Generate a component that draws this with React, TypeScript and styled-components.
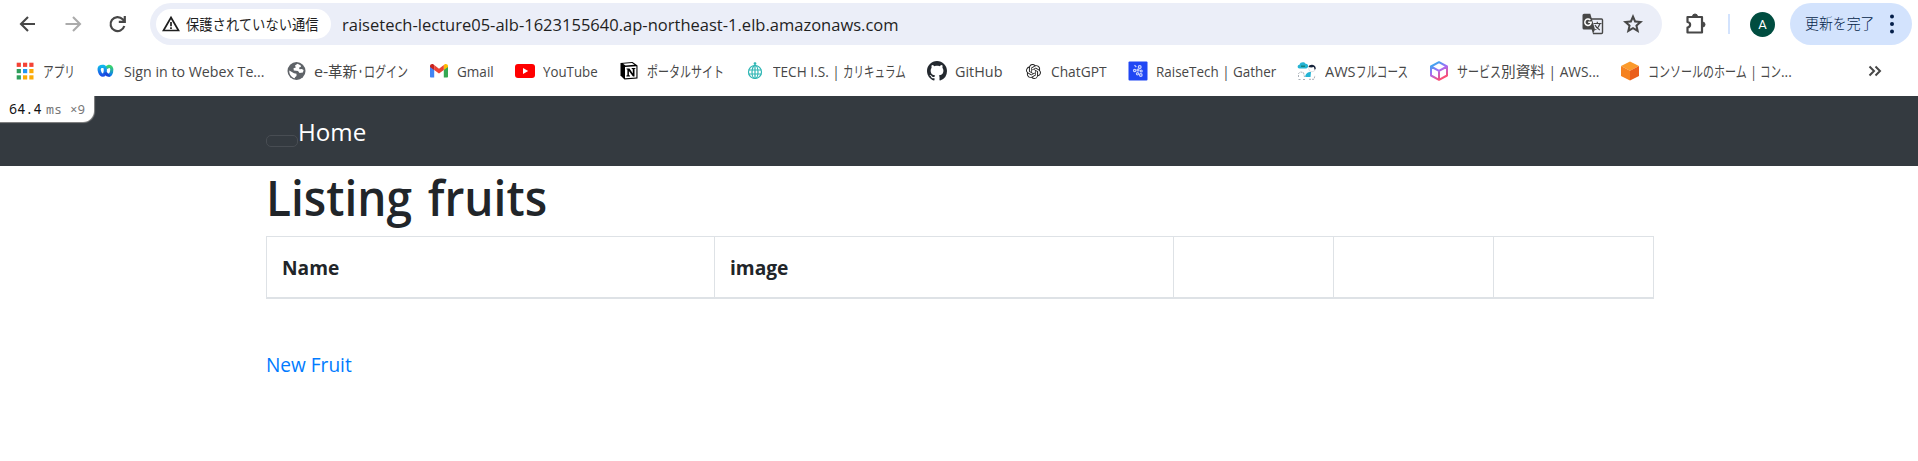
import React, { useLayoutEffect, useRef, useState } from "react";
import styled, { createGlobalStyle } from "styled-components";
import { SiOpenai } from "react-icons/si";

const GlobalStyle = createGlobalStyle`
  * { box-sizing: border-box; }
  body {
    margin: 0;
    background: #fff;
    font-family: "Open Sans", "Noto Sans CJK JP", sans-serif;
  }
`;

/* ---------- text that is condensed to a known width ---------- */

const FitBox = styled.span<{ $w: number }>`
  display: inline-block;
  flex: none;
  width: ${(p) => p.$w}px;
  white-space: pre;
`;

const FitInner = styled.span`
  display: inline-block;
  transform-origin: 0 50%;
`;

function Fit({ w, children }: { w: number; children: string }) {
  const ref = useRef<HTMLSpanElement>(null);
  const [scale, setScale] = useState(1);
  useLayoutEffect(() => {
    if (ref.current && ref.current.offsetWidth) {
      setScale(w / ref.current.offsetWidth);
    }
  }, [w, children]);
  return (
    <FitBox $w={w}>
      <FitInner ref={ref} style={{ transform: `scaleX(${scale})` }}>
        {children}
      </FitInner>
    </FitBox>
  );
}

/* ---------- browser toolbar ---------- */

const Toolbar = styled.header`
  display: flex;
  align-items: center;
  height: 48px;
  padding: 0 6px 0 16px;
`;

const NavButton = styled.span<{ $dim?: boolean }>`
  display: flex;
  width: 24px;
  height: 24px;
  margin-right: 21px;
  color: ${(p) => (p.$dim ? "#ababab" : "#474747")};
`;

const AddressBar = styled.div`
  display: flex;
  align-items: center;
  width: 1512px;
  height: 42px;
  padding: 0 17px 0 6px;
  border-radius: 21px;
  background: #ebeef8;
  color: #1f1f1f;
  margin-left: -1px;
`;

const SecurityChip = styled.div`
  display: flex;
  align-items: center;
  gap: 5px;
  width: 175px;
  height: 30px;
  padding-left: 5px;
  border-radius: 15px;
  background: #fff;
  font-size: 15px;
  line-height: 30px;
`;

const Url = styled.div`
  flex: 1;
  padding-left: 11px;
  font-size: 17px;
  line-height: 41px;
  height: 40px;
`;

const BarIcon = styled.span<{ $ml?: number }>`
  display: flex;
  margin-left: ${(p) => p.$ml ?? 0}px;
  color: #474747;
`;

const Divider = styled.span`
  width: 2px;
  height: 20px;
  margin-left: 20px;
  background: #d3e3fd;
`;

const Avatar = styled.span`
  width: 25px;
  height: 25px;
  margin-left: 20px;
  border-radius: 50%;
  background: #004d40;
  color: #fff;
  font: 400 13px/25px Roboto, sans-serif;
  text-align: center;
`;

const UpdateButton = styled.div`
  display: flex;
  align-items: center;
  justify-content: space-between;
  width: 122px;
  height: 42px;
  margin-left: 15px;
  padding: 0 17px 0 15px;
  border-radius: 21px;
  background: #d3e3fd;
  color: #041e49;
  font-size: 14.5px;
  font-weight: 300;
  line-height: 44px;
`;

/* ---------- bookmarks ---------- */

const Bookmarks = styled.nav`
  display: flex;
  align-items: center;
  gap: 21px;
  height: 48px;
  padding: 0 36px 2px 15px;
  color: #474747;
  font-size: 15px;
  line-height: 25px;
`;

const BookmarkItem = styled.div`
  display: flex;
  align-items: center;
  gap: 8px;
  height: 24px;
`;

const Favicon = styled.span`
  display: flex;
  justify-content: center;
  align-items: center;
  width: 20px;
  height: 20px;
`;

const Label = styled.span`
  display: flex;
  height: 24px;
`;

const Overflow = styled.span`
  display: flex;
  margin-left: auto;
`;

/* ---------- page ---------- */

const Navbar = styled.div`
  position: relative;
  height: 70px;
  background: #343a40;
  padding: 0 266px;
`;

const NavInner = styled.div`
  display: flex;
  align-items: flex-start;
  color: #fff;
  font-size: 24.5px;
  line-height: 38px;
  padding-top: 17px;
`;

const Toggler = styled.span`
  width: 32px;
  height: 12px;
  margin: 22px 0 0 0;
  border: 1px solid #484d53;
  border-radius: 5px;
`;

const ProfilerBadge = styled.div`
  position: absolute;
  left: 0;
  top: 0;
  display: flex;
  align-items: baseline;
  width: 94px;
  height: 26px;
  padding-left: 9px;
  background: #fff;
  border-bottom-right-radius: 11px;
  box-shadow: 0 0 1px 1px #888;
  clip-path: inset(0 -2px -2px 0);
  color: #111;
  font: 14px/26px "Noto Sans Mono", "Liberation Mono", monospace;
`;

const BadgeUnit = styled.span<{ $ml: number }>`
  margin-left: ${(p) => p.$ml}px;
  color: #777;
  font-size: 12.5px;
`;

const Container = styled.main`
  width: 1388px;
  margin-left: 266px;
  color: #212529;
  font-size: 19.5px;
  line-height: 30px;
`;

const Title = styled.h1`
  margin: 0;
  height: 70px;
  padding: 1px 0 0 0;
  font-size: 49px;
  font-weight: 600;
  line-height: 60px;
  word-spacing: 4px;
`;

const Table = styled.div`
  display: grid;
  grid-template-columns: 448px 459px 160px 160px 160px;
  height: 63px;
  border: solid #dee2e6;
  border-width: 1px 0 2px 1px;
`;

const HeadCell = styled.div`
  padding: 16px 15px;
  border-right: 1px solid #dee2e6;
  font-weight: 700;
  font-size: 19.5px;
`;

const NewLink = styled.a`
  display: block;
  margin-top: 51px;
  color: #007bff;
`;

/* ---------- icons ---------- */

const Stroke = ({ d, size = 24, w = 2 }: { d: string; size?: number; w?: number }) => (
  <svg width={size} height={size} viewBox="0 0 24 24" fill="none" stroke="currentColor" strokeWidth={w}>
    <path d={d} />
  </svg>
);

const AppsIcon = () => {
  const colors = ["#f44336", "#f44336", "#f44336", "#2e9e5b", "#2196f3", "#fbab07", "#2e9e5b", "#fbab07", "#fbab07"];
  return (
    <svg width="20" height="20">
      {colors.map((c, i) => (
        <rect key={i} x={1.7 + (i % 3) * 6.3} y={1.7 + Math.floor(i / 3) * 6.3} width="4.2" height="4.2" fill={c} />
      ))}
    </svg>
  );
};

const WebexIcon = () => (
  <svg width="20" height="20" viewBox="0 0 20 20" fill="none" strokeWidth="3.2">
    <defs>
      <linearGradient id="wx1" x1="0" y1="0" x2="0" y2="1">
        <stop offset="0" stopColor="#11b7ea" />
        <stop offset="1" stopColor="#1a4fe8" />
      </linearGradient>
      <linearGradient id="wx2" x1="0" y1="0" x2="0" y2="1">
        <stop offset="0" stopColor="#3bd66b" />
        <stop offset="1" stopColor="#0a7cf0" />
      </linearGradient>
    </defs>
    <path d="M10.5 7.5C11.5 5 14 4.6 15.200 6.400c1.400 2 .3 7.600-2.500 7.800" stroke="url(#wx2)" />
    <path d="M4 6c-2 2 0 8 2.800 8.200C9.500 14.300 10.500 6 7.500 5.400 6 5.200 4.800 5.400 4 6Z" stroke="url(#wx1)" />
    <path d="M9.500 11.500c1 2.500 2.500 3.300 4 2.300" stroke="#1747d8" />
  </svg>
);

const GlobeIcon = () => (
  <svg width="20" height="20" viewBox="0 0 20 20">
    <circle cx="10.500" cy="10" r="9" fill="#5f6368" />
    <path d="M11.500 2.800 9 4.500l.8 2-2.300.8.300 2.200 4.200.5 1.500 2 3.400-.5.700-2.500-1.800-1-2.300.3-.5-1.500 2-1-.5-1.500Z" fill="#fff" />
    <path d="M3.300 9.500l4.700 2.700 2.500.5v2.300l-1.500 1.300-.2 1C5.500 16.500 3 13.500 3.300 9.500Z" fill="#fff" />
  </svg>
);

const GmailIcon = () => (
  <svg width="20" height="20" viewBox="0 0 20 20">
    <path d="M1 5v10.500c0 .6.500 1 1 1h3.200V8Z" fill="#4285f4" />
    <path d="M19 5v10.500c0 .6-.5 1-1 1h-3.200V8Z" fill="#34a853" />
    <path d="M1 5.200C1 3.200 3.300 2.600 4.600 3.600L5.200 4v5L1 6Z" fill="#c5221f" />
    <path d="M19 5.200c0-2-2.300-2.600-3.600-1.600l-.6.4v5L19 6Z" fill="#fbbc04" />
    <path d="M5.200 4 10 7.700 14.800 4v5L10 12.600 5.200 9Z" fill="#ea4335" />
  </svg>
);

const YouTubeIcon = () => (
  <svg width="20" height="20" viewBox="0 0 20 20">
    <rect x="0" y="3" width="20" height="14" rx="3" fill="#f00" />
    <path d="m8 7 5.200 3L8 13Z" fill="#fff" />
  </svg>
);

const NotionIcon = () => (
  <svg width="20" height="20" viewBox="0 0 20 20">
    <path d="M1.500 2 13.500 1 18.500 4.500V17.500L5.500 18.600 1.500 14.500Z" fill="#000" />
    <path d="M4 2.700 13 1.900l2.500 1.900-9 .6Z" fill="#fff" />
    <path d="M6 6 17.400 5.300V16.600L6 17.300Z" fill="#fff" />
    <path d="M7.500 7.500h3l3.300 5V8.300l-1.100-.3v-.9l3.700-.2v.9l-.9.300v7.400h-1.500L9.900 10v4.200l1.100.3v.9H7.400v-.9l1-.3V8.600l-.9-.3Z" fill="#000" />
  </svg>
);

const TechIcon = () => (
  <svg width="20" height="20" viewBox="0 0 20 20" fill="none" stroke="#2cb5b3" strokeWidth="1.200">
    <circle cx="10" cy="11" r="6.500" />
    <ellipse cx="10" cy="11" rx="3" ry="6.500" />
    <path d="M3.500 9h13M3.500 13h13M10 4v13.500" />
    <circle cx="10" cy="2.600" r=".8" fill="#2cb5b3" />
  </svg>
);

const GitHubIcon = () => (
  <svg width="20" height="20" viewBox="0 0 16 16" fill="#24292f">
    <path d="M8 0C3.580 0 0 3.580 0 8c0 3.540 2.290 6.530 5.470 7.590.4.070.55-.17.55-.38 0-.19-.01-.82-.01-1.490-2.010.37-2.530-.49-2.690-.94-.09-.23-.48-.94-.82-1.130-.28-.15-.68-.52-.01-.53.63-.01 1.080.58 1.230.82.72 1.210 1.870.87 2.330.66.07-.52.28-.87.51-1.070-1.780-.2-3.640-.89-3.640-3.950 0-.87.31-1.590.82-2.150-.08-.2-.36-1.020.08-2.120 0 0 .67-.21 2.200.82.64-.18 1.320-.27 2-.27s1.360.09 2 .27c1.530-1.040 2.200-.82 2.200-.82.44 1.100.16 1.920.08 2.120.51.56.82 1.270.82 2.150 0 3.070-1.870 3.750-3.650 3.950.29.25.54.73.54 1.480 0 1.070-.01 1.930-.01 2.200 0 .21.15.46.55.38A8.010 8.010 0 0 0 16 8c0-4.420-3.580-8-8-8Z" />
  </svg>
);

const GatherIcon = () => (
  <svg width="20" height="20" viewBox="0 0 20 20">
    <rect x=".5" y=".5" width="19" height="19" rx="1" fill="#2047f4" />
    <g fill="none" stroke="#c9d3ff" strokeWidth="1.200">
      <path d="M6.500 4.200 8.300 6" />
      <circle cx="11.700" cy="6" r="1.400" />
      <circle cx="6.700" cy="9.500" r="1.200" />
      <circle cx="10" cy="9" r="1" />
      <circle cx="13.200" cy="10" r="1" />
      <circle cx="9.500" cy="12.700" r="1.100" />
      <circle cx="12.800" cy="14" r="1.300" />
    </g>
  </svg>
);

const AwsCourseIcon = () => (
  <svg width="20" height="20" viewBox="0 0 20 20">
    <path d="M3 7.500C0 8 0 3.800 2.500 3.800 3 .8 7.500.6 8.500 2.800c3.200-.3 3.500 4 .8 4.700Z" fill="#25b4d4" />
    <path d="M4 5.200h4" stroke="#176" strokeWidth="1.200" />
    <circle cx="15" cy="7.500" r="3.300" fill="#fff" stroke="#c8cdd2" strokeWidth=".6" />
    <path d="M11.500 6C12 3 18.500 2.500 18.800 7.500l-1 1.500-1-3c-2 .6-3.500.5-5.300 0Z" fill="#17233a" />
    <path d="M8 15.500c1-4 4-5 6-4.500l-.5 5H9Z" fill="#25b4d4" />
    <path d="M1.500 16v-3.500l2-1.500 3 .5 1 4.500M1.500 18.500h3M6 18.500h3M12 18.300h5l1-4" fill="none" stroke="#a0a8b0" strokeWidth=".9" strokeDasharray="2 1" />
  </svg>
);

const CubeIcon = () => (
  <svg width="20" height="20" viewBox="0 0 20 20" fill="none" strokeWidth="2" strokeLinejoin="round">
    <defs>
      <linearGradient id="cb" x1=".1" y1="0" x2=".6" y2="1">
        <stop offset="0" stopColor="#1fb6ee" />
        <stop offset=".5" stopColor="#a66cf5" />
        <stop offset="1" stopColor="#ff4d6d" />
      </linearGradient>
    </defs>
    <path d="M10 1.200 18 5.500v9L10 18.800 2 14.500v-9ZM2 5.500l8 4.300 8-4.300M10 9.800v9" stroke="url(#cb)" />
  </svg>
);

const OrangeCubeIcon = () => (
  <svg width="20" height="20" viewBox="0 0 20 20">
    <path d="M10 .5 19 5 10 9.700 1 5Z" fill="#fb9a2b" />
    <path d="M1 5l9 4.700v9.800L1 15Z" fill="#f58220" />
    <path d="M19 5 10 9.700v9.800L19 15Z" fill="#ea5f1c" />
  </svg>
);

const WarningIcon = () => (
  <svg width="20" height="20" viewBox="0 0 20 20" fill="none" stroke="#1f1f1f" strokeWidth="1.700">
    <path d="M10 3.500 17.500 16.500h-15Z" />
    <path d="M10 8v4.200M10 13.200v1.700" />
  </svg>
);

const TranslateIcon = () => (
  <svg width="22" height="22" viewBox="0 0 22 22">
    <path d="M9 6h10.500a1 1 0 0 1 1 1v12.500a1 1 0 0 1-1 1H11" fill="none" stroke="#474747" strokeWidth="1.400" />
    <path d="M2 .8h6.300L13 16.500l-2 4.500-1.300-4.500H2a1.500 1.500 0 0 1-1.500-1.500V2.300A1.500 1.500 0 0 1 2 .8Z" fill="#474747" />
    <path d="M8.300 7A3.200 3.200 0 1 0 9.200 9.300H6.200" fill="none" stroke="#fff" strokeWidth="1.500" />
    <path d="M11.500 10.500h8M15.300 8.800v1.700M18 10.500c-.8 3-2.700 5-4.700 6.300M13 12c1 2.200 2.700 3.700 4.800 5" fill="none" stroke="#474747" strokeWidth="1.200" />
  </svg>
);

const StarIcon = () => (
  <svg width="24" height="24" viewBox="0 0 24 24" fill="currentColor">
    <path d="m8.850 16.830 3.150-1.900 3.150 1.930-.83-3.600 2.780-2.400-3.650-.32L12 7.150l-1.450 3.370-3.650.32 2.780 2.430-.83 3.560ZM5.820 21l1.630-7.030L2 9.250l7.200-.63L12 2l2.800 6.620 7.200.63-5.450 4.720L18.180 21 12 17.270 5.820 21Z" />
  </svg>
);

const PuzzleIcon = () => (
  <svg width="24" height="24" viewBox="0 0 24 24" fill="none" stroke="currentColor" strokeWidth="2.200" strokeLinejoin="round">
    <path d="M3.500 5H18v15.500H3.500v-5c3.500-.5 3.500-5 0-5.500Z" />
    <path d="M8.500 4.500a2.500 2.500 0 0 1 5 0ZM18.500 10a2.400 2.400 0 0 1 0 5Z" fill="currentColor" strokeWidth="1" />
  </svg>
);

const DotsIcon = () => (
  <svg width="6" height="22" fill="#041e49">
    <circle cx="3" cy="3.500" r="2" />
    <circle cx="3" cy="11" r="2" />
    <circle cx="3" cy="18.500" r="2" />
  </svg>
);

type Part = [string, number];

const bookmarks: { icon: React.ReactNode; parts: Part[] }[] = [
  { icon: <AppsIcon />, parts: [["アプリ", 32]] },
  { icon: <WebexIcon />, parts: [["Sign in to Webex Te...", 141]] },
  { icon: <GlobeIcon />, parts: [["e-", 14], ["革新", 29], ["・", 7], ["ログイン", 44]] },
  { icon: <GmailIcon />, parts: [["Gmail", 37]] },
  { icon: <YouTubeIcon />, parts: [["YouTube", 55]] },
  { icon: <NotionIcon />, parts: [["ポータルサイト", 77]] },
  { icon: <TechIcon />, parts: [["TECH I.S. | ", 70], ["カリキュラム", 63]] },
  { icon: <GitHubIcon />, parts: [["GitHub", 47]] },
  { icon: <SiOpenai size={15} color="#222" />, parts: [["ChatGPT", 56]] },
  { icon: <GatherIcon />, parts: [["RaiseTech | Gather", 120]] },
  { icon: <AwsCourseIcon />, parts: [["AWS", 31], ["フルコース", 52]] },
  { icon: <CubeIcon />, parts: [["サービス", 44], ["別資料", 44], [" | AWS...", 54]] },
  { icon: <OrangeCubeIcon />, parts: [["コンソールのホーム", 99], [" | ", 13], ["コン", 21], ["...", 11]] },
];

export default function App() {
  return (
    <>
      <GlobalStyle />
      <Toolbar>
        <NavButton>
          <Stroke d="M19 12H5M12 5 5 12l7 7" w={2.100} />
        </NavButton>
        <NavButton $dim>
          <Stroke d="M4.500 12H19M12 5l7 7-7 7" w={2.100} />
        </NavButton>
        <NavButton>
          <Stroke d="M18.300 14a7 7 0 1 1-1.600-6.700L18.500 9M18.800 4v5.800h-6" w={2.200} />
        </NavButton>
        <AddressBar>
          <SecurityChip>
            <WarningIcon />
            <Fit w={133}>保護されていない通信</Fit>
          </SecurityChip>
          <Url>
            <Fit w={557}>raisetech-lecture05-alb-1623155640.ap-northeast-1.elb.amazonaws.com</Fit>
          </Url>
          <BarIcon>
            <TranslateIcon />
          </BarIcon>
          <BarIcon $ml={17}>
            <StarIcon />
          </BarIcon>
        </AddressBar>
        <BarIcon $ml={22}>
          <PuzzleIcon />
        </BarIcon>
        <Divider />
        <Avatar>A</Avatar>
        <UpdateButton>
          <Fit w={70}>更新を完了</Fit>
          <DotsIcon />
        </UpdateButton>
      </Toolbar>
      <Bookmarks>
        {bookmarks.map((b, i) => (
          <BookmarkItem key={i}>
            <Favicon>{b.icon}</Favicon>
            <Label>
              {b.parts.map(([text, w]) => (
                <Fit key={text} w={w}>
                  {text}
                </Fit>
              ))}
            </Label>
          </BookmarkItem>
        ))}
        <Overflow>
          <svg width="14" height="12" viewBox="0 0 14 12" fill="none" stroke="#474747" strokeWidth="2">
            <path d="m1.500 1.500 4.500 4.500-4.500 4.500M7.500 1.500 12 6l-4.500 4.500" />
          </svg>
        </Overflow>
      </Bookmarks>
      <Navbar>
        <ProfilerBadge>
          <Fit w={33}>64.4</Fit>
          <BadgeUnit $ml={4}>
            <Fit w={16}>ms</Fit>
          </BadgeUnit>
          <BadgeUnit $ml={8}>
            <Fit w={15}>×9</Fit>
          </BadgeUnit>
        </ProfilerBadge>
        <NavInner>
          <Toggler />
          <Fit w={68}>Home</Fit>
        </NavInner>
      </Navbar>
      <Container>
        <Title>
          <Fit w={281}>Listing fruits</Fit>
        </Title>
        <Table>
          <HeadCell>
            <Fit w={57}>Name</Fit>
          </HeadCell>
          <HeadCell>
            <Fit w={58}>image</Fit>
          </HeadCell>
          <HeadCell />
          <HeadCell />
          <HeadCell />
        </Table>
        <NewLink>
          <Fit w={86}>New Fruit</Fit>
        </NewLink>
      </Container>
    </>
  );
}
